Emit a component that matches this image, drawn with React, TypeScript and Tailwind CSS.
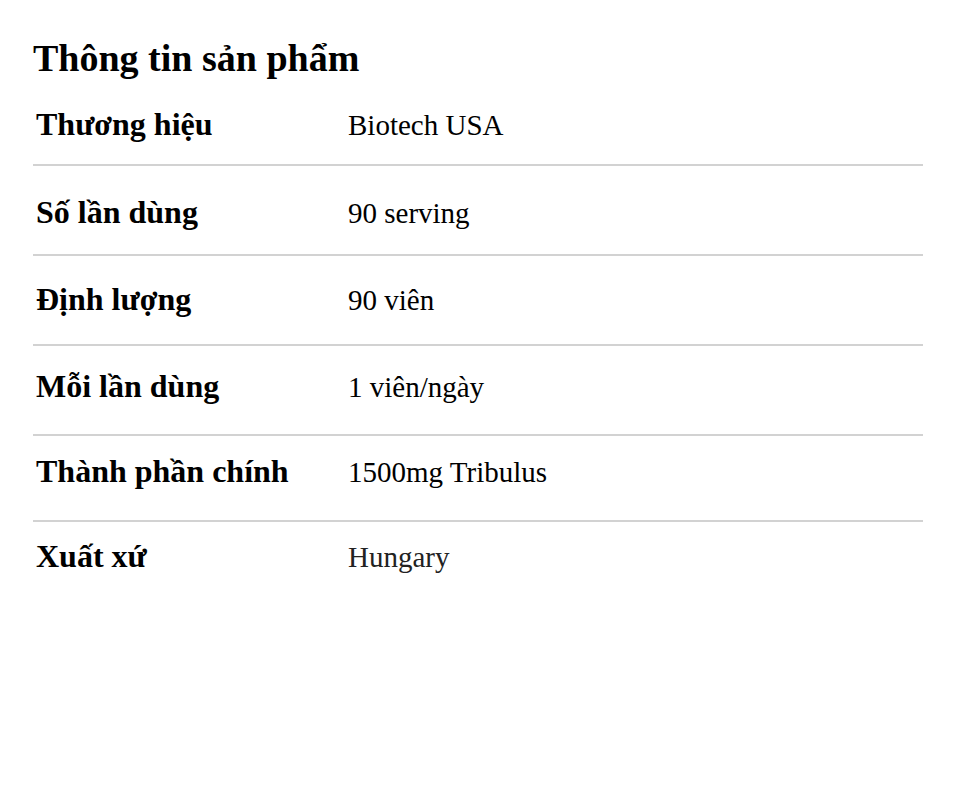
import React from "react";

const rows: { label: string; value: string; pad: string; valueClass?: string }[] = [
  { label: "Thương hiệu", value: "Biotech USA", pad: "pt-[27px] pb-[22px]" },
  { label: "Số lần dùng", value: "90 serving", pad: "pt-[29px] pb-[24px]" },
  { label: "Định lượng", value: "90 viên", pad: "pt-[26px] pb-[27px]" },
  { label: "Mỗi lần dùng", value: "1 viên/ngày", pad: "pt-[23px] pb-[30px]" },
  { label: "Thành phần chính", value: "1500mg Tribulus", pad: "pt-[18px] pb-[31px]" },
  { label: "Xuất xứ", value: "Hungary", pad: "pt-[17px] pb-[20px]", valueClass: "text-[#222]" },
];

export default function App() {
  return (
    <div className="min-h-[803px] w-[954px] bg-white text-black" style={{ fontFamily: '"Liberation Serif", "Times New Roman", serif' }}>
      <div className="ml-[33px] w-[890px] pt-[36px]">
        <h2 className="text-[38px] leading-[44px] font-bold">Thông tin sản phẩm</h2>
        <div className="flex flex-col">
          {rows.map((r, i) => (
            <div
              key={r.label}
              className={`flex items-baseline ${r.pad} ${i < rows.length - 1 ? "border-b-2 border-[#d2d2d2]" : ""}`}
            >
              <div className="w-[315px] shrink-0 pl-[3px] text-[32px] leading-[34px] font-bold">{r.label}</div>
              <div className={`text-[29px] leading-[34px] ${r.valueClass ?? ""}`}>{r.value}</div>
            </div>
          ))}
        </div>
      </div>
    </div>
  );
}
